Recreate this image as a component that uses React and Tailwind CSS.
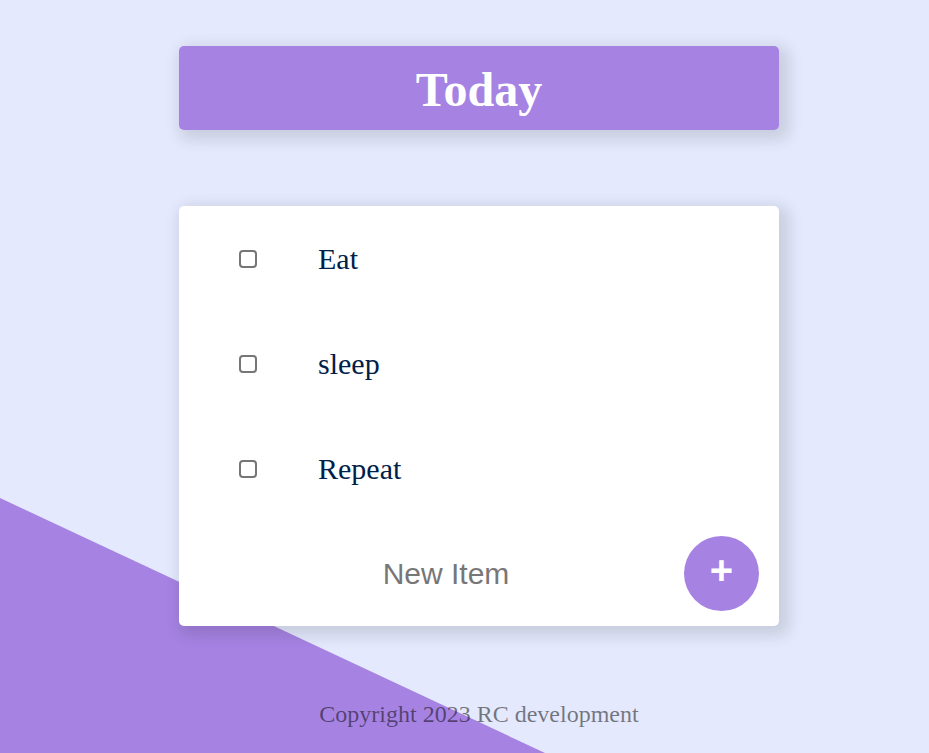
import { useState } from "react";

const startItems = ["Eat", "sleep", "Repeat"];

function App() {
  const [items, setItems] = useState(startItems);
  const [newItem, setNewItem] = useState("");

  const addItem = () => {
    if (newItem.trim()) {
      setItems([...items, newItem.trim()]);
      setNewItem("");
    }
  };

  return (
    <div className="relative min-h-[753px] overflow-hidden bg-[#E4E9FD] font-['Liberation_Serif',serif]">
      {/* purple corner behind everything */}
      <div className="absolute inset-0 bg-[#A683E3] [clip-path:polygon(0_498px,545px_753px,0_753px)]" />

      <div className="relative flex flex-col items-center pl-[29px] pt-[46px]">
        <div className="flex h-[84px] w-[600px] items-center justify-center rounded-[5px] bg-[#A683E3] pt-[4px] shadow-[5px_5px_15px_5px_rgba(0,0,0,0.12)]">
          <h1 className="text-[48px] font-bold leading-none text-white">Today</h1>
        </div>

        <div className="mt-[76px] w-[600px] rounded-[5px] bg-white shadow-[5px_5px_15px_5px_rgba(0,0,0,0.12)]">
          {items.map((item, i) => (
            <div key={i} className="flex h-[105px] items-center">
              <input
                type="checkbox"
                className="ml-[60px] h-[18px] w-[18px] appearance-none rounded-[4px] border-2 border-[#767676] bg-white checked:bg-[#A683E3]"
              />
              <p className="ml-[61px] text-[30px] leading-none text-[#00204a]">{item}</p>
            </div>
          ))}
          <div className="flex h-[105px] items-center">
            <input
              type="text"
              value={newItem}
              onChange={(e) => setNewItem(e.target.value)}
              placeholder="New Item"
              className="ml-[139px] w-[256px] bg-transparent text-center font-['Liberation_Sans',sans-serif] text-[30px] text-[#00204a] outline-none placeholder:text-[#777]"
            />
            <button
              onClick={addItem}
              className="ml-auto mr-[20px] flex h-[75px] w-[75px] items-center justify-center rounded-full bg-[#A683E3] pb-[8px] font-['Liberation_Sans',sans-serif] text-[40px] font-bold leading-none text-white"
            >
              +
            </button>
          </div>
        </div>

        <footer className="mt-[70px] text-[24px] text-black/50">
          Copyright 2023 RC development
        </footer>
      </div>
    </div>
  );
}

export default App;
